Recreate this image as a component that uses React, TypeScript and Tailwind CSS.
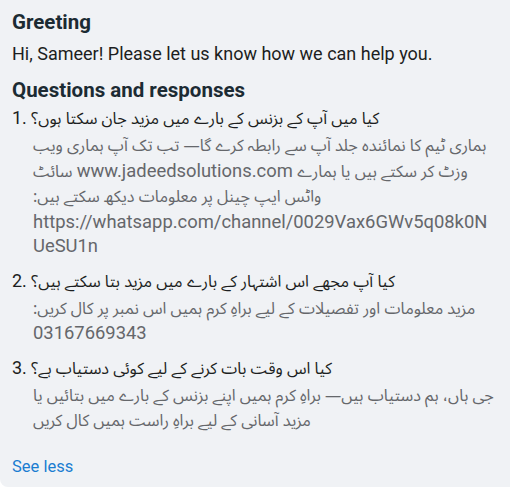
const Ar = ({ children }: { children: string }) => (
  <span className="font-['Noto_Sans_Arabic',sans-serif] text-[16.2px]">{children}</span>
)

const faq = [
  {
    n: '1.',
    q: 'کیا میں آپ کے بزنس کے بارے میں مزید جان سکتا ہوں؟',
    a: (
      <>
        <Ar>ہماری ٹیم کا نمائندہ جلد آپ سے رابطہ کرے گا— تب تک آپ ہماری ویب سائٹ </Ar>
        www.jadeedsolutions.com
        <Ar>{' وزٹ کر سکتے ہیں یا ہمارے واٹس ایپ چینل پر معلومات دیکھ سکتے ہیں:\u200F '}</Ar>
        https://whatsapp.com/channel/0029Vax6GWv5q08k0NUeSU1n
      </>
    ),
  },
  {
    n: '2.',
    q: 'کیا آپ مجھے اس اشتہار کے بارے میں مزید بتا سکتے ہیں؟',
    a: (
      <>
        <Ar>{'مزید معلومات اور تفصیلات کے لیے براہِ کرم ہمیں اس نمبر پر کال کریں:\u200F '}</Ar>
        03167669343
      </>
    ),
  },
  {
    n: '3.',
    q: 'کیا اس وقت بات کرنے کے لیے کوئی دستیاب ہے؟',
    a: (
      <Ar>جی ہاں، ہم دستیاب ہیں— براہِ کرم ہمیں اپنے بزنس کے بارے میں بتائیں یا مزید آسانی کے لیے براہِ راست ہمیں کال کریں</Ar>
    ),
  },
]

export default function App() {
  return (
    <div className="w-[510px] h-[493px] overflow-hidden bg-white font-['Roboto','Noto_Sans_Arabic',sans-serif]">
      <div className="w-[520px] bg-[#f0f2f5] rounded-b-lg pl-3 pr-[24px] pt-[9px] pb-[9px]">
        <h2 className="text-[20.5px] leading-[26px] font-bold text-[#1c2b33]">Greeting</h2>
        <p className="mt-[7px] text-[18px] leading-[24px] text-[#1c1e21]">
          Hi, Sameer! Please let us know how we can help you.
        </p>

        <h2 className="mt-[11px] text-[20.5px] leading-[26px] font-bold text-[#1c2b33]">
          Questions and responses
        </h2>

        <ol className="mt-[1px] flex flex-col gap-[8px]">
          {faq.map((item) => (
            <li key={item.n}>
              <p className="text-[18px] leading-[28px] text-[#1c1e21]">
                {item.n} <bdi className="font-['Noto_Sans_Arabic',sans-serif] text-[16.2px]">{item.q}</bdi>
              </p>
              <p className="pl-[21px] text-[18.4px] leading-[24.5px] text-[#65676b] break-words">{item.a}</p>
            </li>
          ))}
        </ol>

        <button className="mt-[22px] block text-[16.5px] leading-[22px] text-[#1a7dd1]">See less</button>
      </div>
    </div>
  )
}
